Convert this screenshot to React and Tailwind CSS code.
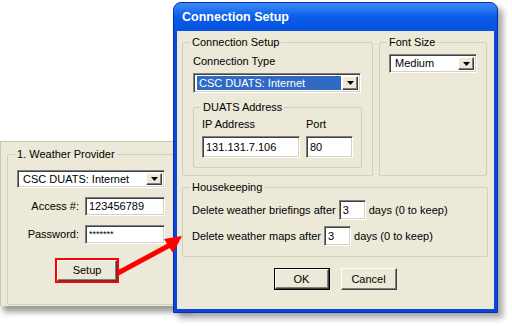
import React from "react";

const sunken =
  "bg-white border border-[#808080] border-r-white border-b-white shadow-[inset_1px_1px_0_#404040,inset_-1px_-1px_0_#d4d0c8]";
const raised =
  "bg-[#ece9d8] border border-white border-r-[#404040] border-b-[#404040] shadow-[inset_-1px_-1px_0_#808080]";

const Arrow = () => (
  <svg width="7" height="4" viewBox="0 0 7 4">
    <path d="M0 0h7L3.5 4z" fill="#000" />
  </svg>
);

const Select = ({ value, selected, className }) => (
  <div className={`flex items-stretch p-[2px] ${sunken} ${className}`}>
    <div className="flex-1 flex items-center px-[1px]">
      <span
        className={`flex-1 h-full flex items-center px-[2px] ${
          selected ? "bg-[#316ac5] text-white" : ""
        }`}
      >
        {value}
      </span>
    </div>
    <div className={`w-[16px] flex items-center justify-center ${raised}`}>
      <Arrow />
    </div>
  </div>
);

const Input = ({ value, className }) => (
  <div className={`flex items-center px-[3px] ${sunken} ${className}`}>{value}</div>
);

// groupbox: fieldset holds only the frame, padding goes on the inner div
const Group = ({ label, className, inner, children }) => (
  <fieldset className={`border border-[#d0d0bf] rounded-[2px] ${className}`}>
    <legend className="ml-[7px] px-[2px] leading-[13px]">{label}</legend>
    <div className={inner}>{children}</div>
  </fieldset>
);

export default function App() {
  return (
    <div className="relative w-[512px] h-[326px] bg-white overflow-hidden font-['Liberation_Sans',Arial,sans-serif] text-[11px] text-black">
      {/* background window */}
      <div className="absolute left-0 top-[141px] w-[190px] h-[165px] bg-[#ece9d8] border-t border-l border-[#c8c5b4] shadow-[3px_6px_6px_rgba(0,0,0,0.4)] pt-[6px] pl-[6px]">
        <Group label="1. Weather Provider" className="w-[200px] h-[157px]" inner="pl-[9px] pt-[9px]">
          <Select value="CSC DUATS: Internet" className="w-[148px] h-[18px]" />
          <div className="flex items-center mt-[9px]">
            <span className="w-[62px] text-right">Access #:</span>
            <Input value="123456789" className="ml-[6px] w-[80px] h-[19px]" />
          </div>
          <div className="flex items-center mt-[9px]">
            <span className="w-[62px] text-right">Password:</span>
            <Input value="*******" className="ml-[6px] w-[80px] h-[19px] text-[9px] items-start pt-[2px]" />
          </div>
          <div className="mt-[14px] ml-[38px] w-[64px] h-[25px] border-2 border-[#ff0000]">
            <button className={`w-full h-full ${raised}`}>Setup</button>
          </div>
        </Group>
      </div>

      {/* dialog */}
      <div className="absolute left-[173px] top-[2px] w-[325px] h-[311px] bg-[#0848dc] border border-[#0a2ab0] rounded-t-[8px] shadow-[5px_5px_6px_rgba(0,0,0,0.35)] flex flex-col px-[3px] pb-[3px]">
        <div className="h-[28px] -mx-[3px] rounded-t-[7px] bg-linear-to-b from-[#3c8cf8] via-[#0a5ce8] to-[#0752e2] flex items-center pl-[8px] text-white font-bold text-[12.5px]">
          Connection Setup
        </div>
        <div className="flex-1 bg-[#ece9d8] pl-[5px] pr-[6px] pt-[5px] flex flex-col">
          <div className="flex gap-[6px]">
            <Group label="Connection Setup" className="w-[190px] h-[140px]" inner="px-[10px] pt-[6px]">
              <div className="leading-[13px]">Connection Type</div>
              <Select value="CSC DUATS: Internet" selected className="mt-[5px] w-[168px] h-[20px]" />
              <Group label="DUATS Address" className="mt-[8px] w-[169px] h-[67px]" inner="pl-[8px] pt-[4px]">
                <div className="flex gap-[6px]">
                  <div className="flex flex-col gap-[5px]">
                    <span className="leading-[13px]">IP Address</span>
                    <Input value="131.131.7.106" className="w-[98px] h-[22px]" />
                  </div>
                  <div className="flex flex-col gap-[5px]">
                    <span className="leading-[13px]">Port</span>
                    <Input value="80" className="w-[47px] h-[22px]" />
                  </div>
                </div>
              </Group>
            </Group>
            <Group label="Font Size" className="w-[108px] h-[140px]" inner="pl-[9px] pt-[5px]">
              <Select value="Medium" className="w-[88px] h-[19px]" />
            </Group>
          </div>
          <Group label="Housekeeping" className="mt-[5px] h-[76px]" inner="pl-[9px] pt-[6px] flex flex-col gap-[6px]">
            <div className="flex items-center gap-[3px]">
              <span>Delete weather briefings after</span>
              <Input value="3" className="w-[27px] h-[20px]" />
              <span>days (0 to keep)</span>
            </div>
            <div className="flex items-center gap-[3px]">
              <span>Delete weather maps after</span>
              <Input value="3" className="w-[27px] h-[20px]" />
              <span>days (0 to keep)</span>
            </div>
          </Group>
          <div className="mt-[11px] flex justify-center gap-[11px]">
            <div className="w-[56px] h-[22px] border border-black">
              <button className={`w-full h-full ${raised}`}>OK</button>
            </div>
            <button className={`w-[56px] h-[22px] ${raised}`}>Cancel</button>
          </div>
        </div>
      </div>

      {/* callout arrow */}
      <svg className="absolute left-0 top-0 pointer-events-none" width="512" height="326">
        <line x1="118" y1="273" x2="170" y2="245" stroke="#ff0000" strokeWidth="5" />
        <polygon points="182,236 164,239 173,253" fill="#ff0000" />
      </svg>
    </div>
  );
}
